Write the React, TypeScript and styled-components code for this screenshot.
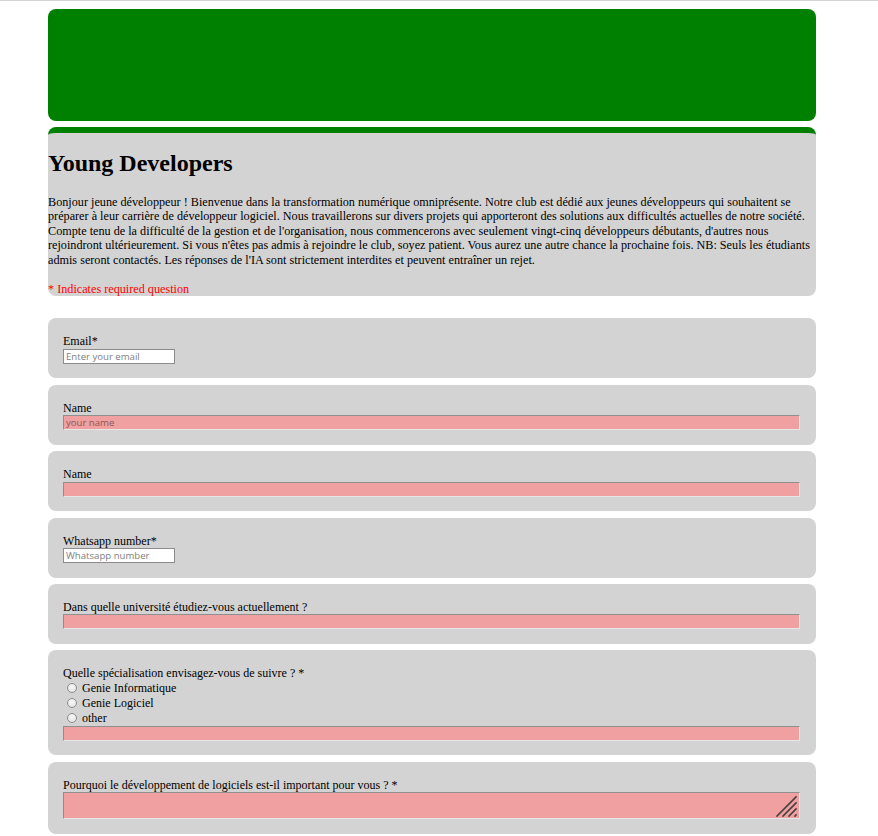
import styled, { createGlobalStyle } from "styled-components";

const GlobalStyle = createGlobalStyle`
  body {
    margin: 0;
    padding: 8px 0 0;
    border-top: 1px solid #d3d3d3;
    background: #ffffff;
    font-family: "Liberation Serif", "Times New Roman", serif;
    color: #000;
  }
`;

const Page = styled.main`
  width: 768px;
  margin-left: 48px;
  display: flex;
  flex-direction: column;
`;

const Banner = styled.div`
  height: 112px;
  background: #008000;
  border-radius: 8px;
  margin-bottom: 6px;
`;

const Intro = styled.header`
  background: #d3d3d3;
  border-top: 6px solid #008000;
  border-radius: 8px;
  margin-bottom: 22px;
`;

const Title = styled.h1`
  font-size: 24px;
  line-height: 28px;
  margin: 15.6px 0 18.3px;
`;

const Text = styled.p`
  font-size: 12.2px;
  line-height: 14.5px;
  margin: 0 0 14.5px;
`;

const Required = styled.p`
  font-size: 12.2px;
  line-height: 14.5px;
  margin: 0;
  color: red;
`;

const Questions = styled.form`
  display: flex;
  flex-direction: column;
  gap: 6.4px;
`;

const Card = styled.section`
  background: #d3d3d3;
  border-radius: 8px;
  padding: 16px 16px 14.5px 15px;
`;

const Label = styled.label`
  display: block;
  font-size: 12px;
  line-height: 14.5px;
`;

const SmallInput = styled.input`
  display: block;
  box-sizing: border-box;
  width: 112px;
  height: 15px;
  margin: 0;
  padding: 0 2px;
  border: 1px solid #8c8c8c;
  background: #fff;
  font-family: "Open Sans", "Liberation Sans", sans-serif;
  font-size: 9.6px;

  &::placeholder {
    color: #808080;
  }
`;

const WideInput = styled.input`
  display: block;
  box-sizing: border-box;
  width: 100%;
  height: 15px;
  margin: 0;
  padding: 0 2px;
  border: 1px solid;
  border-color: #8f8f8f #e6e6e6 #e6e6e6 #8f8f8f;
  background: #f0a0a0;
  font-family: "Open Sans", "Liberation Sans", sans-serif;
  font-size: 9.6px;

  &::placeholder {
    color: #8a5858;
  }
`;

const AreaBox = styled.div`
  position: relative;
`;

const Area = styled.textarea`
  display: block;
  box-sizing: border-box;
  width: 100%;
  height: 27px;
  margin: 0;
  border: 1px solid;
  border-color: #8f8f8f #e6e6e6 #e6e6e6 #8f8f8f;
  background: #f0a0a0;
  resize: none;
`;

const Grip = styled.svg`
  position: absolute;
  right: 1px;
  bottom: 1px;
  pointer-events: none;
`;

const Choice = styled.label`
  display: flex;
  align-items: center;
  font-size: 12px;
  line-height: 15px;
  height: 15px;
`;

const Radio = styled.input`
  appearance: none;
  box-sizing: border-box;
  width: 10px;
  height: 10px;
  margin: 0 5px 0 4px;
  border-radius: 50%;
  border: 1px solid #8f8f8f;
  background: radial-gradient(circle at 50% 40%, #fafafa 0%, #e4e4e4 70%, #cfcfcf 100%);
`;

export default function App() {
  return (
    <>
      <GlobalStyle />
      <Page>
        <Banner />
        <Intro>
          <Title>Young Developers</Title>
          <Text>
            Bonjour jeune développeur ! Bienvenue dans la transformation numérique omniprésente. Notre club est dédié aux jeunes développeurs qui souhaitent se préparer à leur carrière de développeur logiciel. Nous travaillerons sur divers projets qui apporteront des solutions aux difficultés actuelles de notre société. Compte tenu de la difficulté de la gestion et de l'organisation, nous commencerons avec seulement vingt-cinq développeurs débutants, d'autres nous rejoindront ultérieurement. Si vous n'êtes pas admis à rejoindre le club, soyez patient. Vous aurez une autre chance la prochaine fois. NB: Seuls les étudiants admis seront contactés. Les réponses de l'IA sont strictement interdites et peuvent entraîner un rejet.
          </Text>
          <Required>* Indicates required question</Required>
        </Intro>
        <Questions>
          <Card>
            <Label htmlFor="email">Email*</Label>
            <SmallInput id="email" type="email" placeholder="Enter your email" />
          </Card>
          <Card>
            <Label htmlFor="name">Name</Label>
            <WideInput id="name" placeholder="your name" />
          </Card>
          <Card>
            <Label htmlFor="name2">Name</Label>
            <WideInput id="name2" />
          </Card>
          <Card>
            <Label htmlFor="phone">Whatsapp number*</Label>
            <SmallInput id="phone" type="tel" placeholder="Whatsapp number" />
          </Card>
          <Card>
            <Label htmlFor="uni">Dans quelle université étudiez-vous actuellement ?</Label>
            <WideInput id="uni" />
          </Card>
          <Card>
            <Label>Quelle spécialisation envisagez-vous de suivre ? *</Label>
            <Choice>
              <Radio type="radio" name="spec" />
              Genie Informatique
            </Choice>
            <Choice>
              <Radio type="radio" name="spec" />
              Genie Logiciel
            </Choice>
            <Choice>
              <Radio type="radio" name="spec" />
              other
            </Choice>
            <WideInput />
          </Card>
          <Card>
            <Label htmlFor="why">Pourquoi le développement de logiciels est-il important pour vous ? *</Label>
            <AreaBox>
              <Area id="why" />
              <Grip width="24" height="24" viewBox="0 0 24 24">
                <g stroke="#4a4040" strokeWidth="1.6" strokeLinecap="square">
                  <line x1="2" y1="22" x2="21" y2="3" />
                  <line x1="8" y1="22" x2="21" y2="9" />
                  <line x1="14" y1="22" x2="21" y2="15" />
                  <line x1="20" y1="22" x2="21" y2="21" />
                </g>
              </Grip>
            </AreaBox>
          </Card>
        </Questions>
      </Page>
    </>
  );
}
